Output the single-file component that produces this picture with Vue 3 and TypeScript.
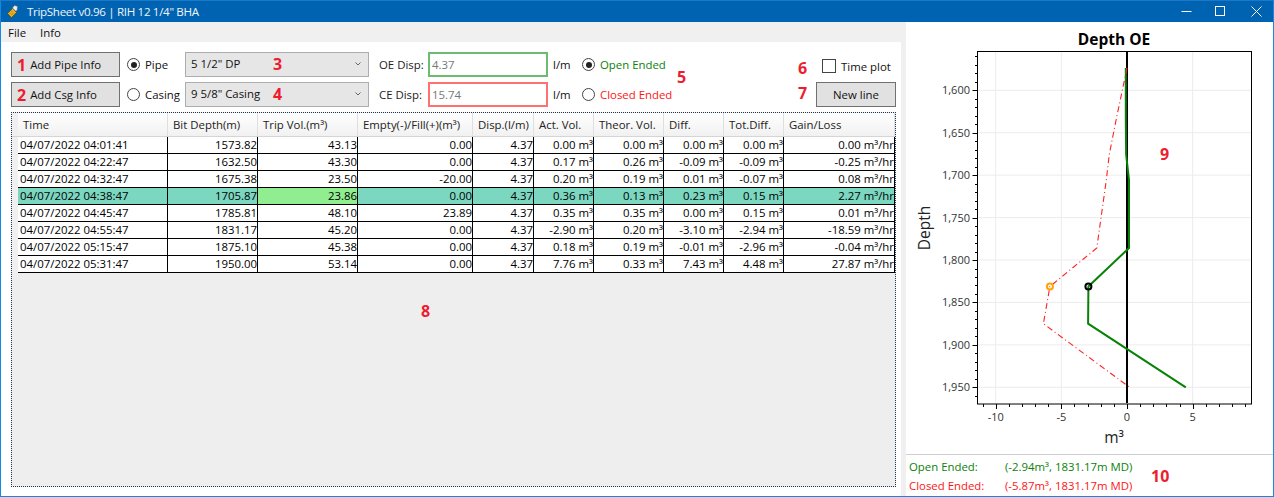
<script setup lang="ts">
const columns = ['Time', 'Bit Depth(m)', 'Trip Vol.(m³)', 'Empty(-)/Fill(+)(m³)', 'Disp.(l/m)', 'Act. Vol.', 'Theor. Vol.', 'Diff.', 'Tot.Diff.', 'Gain/Loss'];
const rows: string[][] = [
  ['04/07/2022 04:01:41', '1573.82', '43.13', '0.00', '4.37', '0.00 m³', '0.00 m³', '0.00 m³', '0.00 m³', '0.00 m³/hr'],
  ['04/07/2022 04:22:47', '1632.50', '43.30', '0.00', '4.37', '0.17 m³', '0.26 m³', '-0.09 m³', '-0.09 m³', '-0.25 m³/hr'],
  ['04/07/2022 04:32:47', '1675.38', '23.50', '-20.00', '4.37', '0.20 m³', '0.19 m³', '0.01 m³', '-0.07 m³', '0.08 m³/hr'],
  ['04/07/2022 04:38:47', '1705.87', '23.86', '0.00', '4.37', '0.36 m³', '0.13 m³', '0.23 m³', '0.15 m³', '2.27 m³/hr'],
  ['04/07/2022 04:45:47', '1785.81', '48.10', '23.89', '4.37', '0.35 m³', '0.35 m³', '0.00 m³', '0.15 m³', '0.01 m³/hr'],
  ['04/07/2022 04:55:47', '1831.17', '45.20', '0.00', '4.37', '-2.90 m³', '0.20 m³', '-3.10 m³', '-2.94 m³', '-18.59 m³/hr'],
  ['04/07/2022 05:15:47', '1875.10', '45.38', '0.00', '4.37', '0.18 m³', '0.19 m³', '-0.01 m³', '-2.96 m³', '-0.04 m³/hr'],
  ['04/07/2022 05:31:47', '1950.00', '53.14', '0.00', '4.37', '7.76 m³', '0.33 m³', '7.43 m³', '4.48 m³', '27.87 m³/hr'],
];

const px = (v: number): number => 1127 + v * 13.13;
const py = (d: number): number => 90.3 + (d - 1600) * 0.8486;
const line = (pts: number[][]): string => pts.map(([v, d]) => `${px(v).toFixed(1)},${py(d).toFixed(1)}`).join(' ');

const depths = [1573.82, 1632.5, 1675.38, 1705.87, 1785.81, 1831.17, 1875.1, 1950];
const openEnded = [-0.09, -0.09, -0.07, 0.15, 0.15, -2.94, -2.96, 4.48];
const closedEnded = [0, -0.8, -1.35, -1.58, -2.3, -5.87, -6.37, 0.2];
const greenPts = line(depths.map((d, i) => [openEnded[i], d]));
const redPts = line(depths.map((d, i) => [closedEnded[i], d]));

const yMajor = [1600, 1650, 1700, 1750, 1800, 1850, 1900, 1950];
const xMajor = [-10, -5, 0, 5];
const yMinor: number[] = [];
for (let d = 1560; d <= 1960; d += 10) yMinor.push(d);
const xMinor: number[] = [];
for (let v = -11; v <= 9; v += 1) xMinor.push(v);
const fmt = (d: number): string => `${Math.floor(d / 1000)},${String(d % 1000).padStart(3, '0')}`;
</script>

<template>
  <div class="window">
    <header class="titlebar">
      <svg class="appicon" width="14" height="14" viewBox="0 0 14 14">
        <path d="M0.5 8.5 L5.5 3.5 L9.5 7.5 L4.5 12.5 Z" fill="#e6b325" stroke="#5f4a10" stroke-width="0.7" />
        <path d="M3 8.5 L5.5 6 M4.5 10 L7 7.5" stroke="#7a5d10" stroke-width="0.9" stroke-dasharray="1 1" />
        <path d="M5.5 3 L7.5 0.5 L10.5 1.5 L10 5.5 L8.5 6 Z" fill="#f0f0f0" stroke="#777" stroke-width="0.5" />
      </svg>
      <span class="title">TripSheet v0.96 | RIH 12 1/4" BHA</span>
      <div class="winbtns">
        <svg class="wmin" width="11" height="11" viewBox="0 0 11 11"><path d="M0.5 5.5H10.5" stroke="#fff" fill="none" /></svg>
        <svg class="wmax" width="11" height="11" viewBox="0 0 11 11"><rect x="0.5" y="0.5" width="9" height="9" stroke="#fff" fill="none" /></svg>
        <svg width="11" height="11" viewBox="0 0 11 11"><path d="M0.5 0.5L10.5 10.5M10.5 0.5L0.5 10.5" stroke="#fff" fill="none" /></svg>
      </div>
    </header>

    <div class="body">
      <div class="main">
        <nav class="menu"><span>File</span><span>Info</span></nav>
        <section class="panel">
          <div class="controls">
            <button class="btn"><b class="num">1</b>Add Pipe Info</button>
            <label class="radio"><i class="dot on"></i>Pipe</label>
            <div class="combo"><span>5 1/2" DP</span><b class="num n3">3</b>
              <svg width="6" height="4" viewBox="0 0 6 4"><path d="M0.5 0.5L3 3L5.5 0.5" stroke="#666" fill="none" /></svg>
            </div>
            <span class="lbl">OE Disp:</span>
            <div class="field green">4.37</div>
            <span class="unit">l/m</span>
            <label class="radio wide green-t"><i class="dot on"></i>Open Ended</label>
            <label class="check"><b class="num n6">6</b><i class="box"></i>Time plot</label>

            <button class="btn"><b class="num">2</b>Add Csg Info</button>
            <label class="radio"><i class="dot"></i>Casing</label>
            <div class="combo"><span>9 5/8" Casing</span><b class="num n4">4</b>
              <svg width="6" height="4" viewBox="0 0 6 4"><path d="M0.5 0.5L3 3L5.5 0.5" stroke="#666" fill="none" /></svg>
            </div>
            <span class="lbl">CE Disp:</span>
            <div class="field red">15.74</div>
            <span class="unit">l/m</span>
            <label class="radio wide red-t"><i class="dot"></i>Closed Ended<b class="num n5">5</b></label>
            <div class="newcell"><b class="num n7">7</b><button class="btn newline">New line</button></div>
          </div>

          <div class="grid">
            <div class="row head">
              <div class="corner"></div>
              <div v-for="c in columns" :key="c" class="hcell">{{ c }}</div>
            </div>
            <div v-for="(r, i) in rows" :key="i" class="row" :class="{ sel: i === 3 }">
              <div class="rowhead"></div>
              <div v-for="(v, j) in r" :key="j" class="cell" :class="{ first: j === 0, hot: i === 3 && j === 2 }">{{ v }}</div>
            </div>
            <b class="num n8">8</b>
          </div>
        </section>
      </div>

      <aside class="side">
        <svg class="chart" width="367" height="432" viewBox="906 22 367 432">
          <g stroke="#ececec" stroke-width="1">
            <line v-for="d in yMajor" :key="d" x1="978" x2="1251" :y1="py(d)" :y2="py(d)" />
            <line v-for="v in xMajor" :key="v" :x1="px(v)" :x2="px(v)" y1="52" y2="404" />
          </g>
          <rect x="977.5" y="51.5" width="274" height="352.5" fill="none" stroke="#000" />
          <g stroke="#000" stroke-width="1">
            <line v-for="d in yMinor" :key="d" :x1="d % 50 === 0 ? 972.5 : 975" x2="977.5" :y1="Math.round(py(d)) + 0.5" :y2="Math.round(py(d)) + 0.5" />
            <line v-for="v in xMinor" :key="v" :x1="Math.round(px(v)) + 0.5" :x2="Math.round(px(v)) + 0.5" y1="404" :y2="v % 5 === 0 ? 409 : 407" />
          </g>
          <line x1="1127" x2="1127" y1="52" y2="403" stroke="#000" stroke-width="2" />
          <polyline :points="greenPts" fill="none" stroke="#078207" stroke-width="2" />
          <polyline :points="redPts" fill="none" stroke="#ff2020" stroke-width="1.1" stroke-dasharray="6 3 1 3" />
          <circle :cx="px(-5.87)" :cy="py(1831.17)" r="3" fill="none" stroke="#ffa500" stroke-width="2" />
          <circle :cx="px(-2.94)" :cy="py(1831.17)" r="3" fill="none" stroke="#000" stroke-width="2" />
          <text x="1114" y="45" class="ctitle" text-anchor="middle">Depth OE</text>
          <text v-for="d in yMajor" :key="d" x="970" :y="py(d) + 4" class="tick" text-anchor="end">{{ fmt(d) }}</text>
          <text v-for="v in xMajor" :key="v" :x="px(v)" y="421" class="tick" text-anchor="middle">{{ v }}</text>
          <text x="1114" y="443" class="axis" text-anchor="middle">m³</text>
          <text x="0" y="0" class="axis" text-anchor="middle" transform="translate(929.5 228) rotate(-90)">Depth</text>
        </svg>
        <b class="num n9">9</b>
        <footer class="readout">
          <span class="green-t">Open Ended:</span><span class="green-t">(-2.94m³, 1831.17m MD)</span>
          <span class="red-t">Closed Ended:</span><span class="red-t">(-5.87m³, 1831.17m MD)</span>
          <b class="num n10">10</b>
        </footer>
      </aside>
    </div>
  </div>
</template>

<style>
html, body { margin: 0; padding: 0; background: #fff; }
</style>

<style scoped>
.window {
  width: 1274px;
  height: 497px;
  box-sizing: border-box;
  border: 1px solid #1489e4;
  border-top-color: #1a78c8;
  display: flex;
  flex-direction: column;
  font-family: "Open Sans", "Noto Sans", sans-serif;
  font-size: 11.4px;
  color: #111;
  overflow: hidden;
  background: #fff;
}
.titlebar {
  height: 21px;
  flex: none;
  background: #0063b1;
  color: #fff;
  display: flex;
  align-items: center;
  padding-left: 6px;
}
.appicon { flex: none; }
.title { margin-left: 6px; font-size: 11.6px; letter-spacing: -0.33px; color: #eef4fa; }
.winbtns { margin-left: auto; display: flex; padding-right: 11px; align-items: center; }
.winbtns svg { display: block; }
.wmin { margin-right: 23px; }
.wmax { margin-right: 25px; }
.body { flex: 1; display: flex; min-height: 0; }
.main { width: 905px; flex: none; background: #f0f0f0; display: flex; flex-direction: column; }
.menu { height: 20px; flex: none; display: flex; align-items: center; gap: 14px; padding-left: 7px; }
.panel { width: 900px; flex: 1; background: #fff; box-sizing: border-box; padding: 10px 0 0 10px; }
.controls {
  display: grid;
  grid-template-columns: 109px 65px 184px 10px 49px 120px 34px 234px 80px;
  grid-template-rows: 25px 25px;
  row-gap: 5px;
  align-items: center;
}
.controls > .lbl { grid-column: 5; }
.controls > .combo { grid-column: 3; }
.controls > .field { grid-column: 6; }
.controls > .unit { grid-column: 7; padding-left: 5px; }
.controls > .radio.wide { grid-column: 8; padding-left: 0; }
.controls > .check, .controls > .newcell { grid-column: 9; }
.btn {
  height: 25px;
  box-sizing: border-box;
  background: #e1e1e1;
  border: 1px solid #707070;
  padding: 0;
  font: inherit;
  color: #111;
  display: flex;
  align-items: center;
  justify-content: flex-start;
  position: relative;
  width: 109px;
  padding-left: 5px;
}
.num {
  color: #ee1c2e;
  font-weight: 700;
  font-size: 16px;
  line-height: 1;
}
.btn .num { margin-right: 4px; }
.radio { display: flex; align-items: center; height: 25px; padding-left: 7px; position: relative; }
.dot {
  width: 11px;
  height: 11px;
  border: 1px solid #444;
  border-radius: 50%;
  margin-right: 5px;
  position: relative;
  flex: none;
  background: #fff;
}
.dot.on::after {
  content: "";
  position: absolute;
  left: 2.5px;
  top: 2.5px;
  width: 6px;
  height: 6px;
  border-radius: 50%;
  background: #222;
}
.combo {
  height: 25px;
  box-sizing: border-box;
  background: #e6e6e6;
  border: 1px solid #adadad;
  display: flex;
  align-items: center;
  padding: 0 7px 3px 5px;
  justify-content: space-between;
  position: relative;
}
.combo svg { margin-top: 1px; }
.n3 { position: absolute; left: 87px; top: 3px; }
.n4 { position: absolute; left: 87px; top: 3px; }
.n5 { position: absolute; left: 95px; top: -13px; }
.n6 { position: absolute; left: -18px; top: 1px; }
.n7 { position: absolute; left: -18px; top: 3px; }
.n8 { position: absolute; left: 409px; top: 190px; }
.n9 { position: absolute; left: 254px; top: 124px; }
.n10 { position: absolute; left: 245px; top: 13px; }
.lbl { color: #222; }
.field {
  height: 25px;
  box-sizing: border-box;
  border: 2px solid;
  padding-left: 2px;
  display: flex;
  align-items: center;
  color: #777;
}
.field.green { border-color: #6cbb6e; }
.field.red { border-color: #ff7070; }
.green-t { color: #0a820a; }
.red-t { color: #ff1414; }
.check { display: flex; align-items: center; position: relative; padding-left: 6px; margin-top: 3px; }
.box { width: 12px; height: 12px; border: 1px solid #444; margin-right: 5px; flex: none; }
.newcell { position: relative; display: flex; }
.newline { width: 80px; justify-content: center; padding: 0; }
.grid {
  margin-top: 5px;
  width: 885px;
  height: 375px;
  box-sizing: border-box;
  border: 1px dotted #1f3550;
  background: #eee;
  position: relative;
  overflow: hidden;
}
.row {
  display: grid;
  grid-template-columns: 6px 150px 90px 100px 115px 61px 60px 70px 60px 60px 111px;
  height: 17px;
  box-sizing: border-box;
  border-bottom: 1px solid #000;
  background: #fff;
  line-height: 16px;
  color: #000;
}
.row.sel { background: #7bd7c0; }
.row.head {
  height: 24px;
  background: linear-gradient(#fff, #f1f1f1);
  border-bottom: 1px solid #d5d5d5;
  line-height: 23px;
}
.corner, .rowhead { background: #f0f0f0; }
.rowhead { margin-bottom: -1px; }
.hcell {
  padding-left: 5px;
  border-right: 1px solid #dfdfdf;
  white-space: nowrap;
  overflow: hidden;
  color: #222;
}
.cell {
  text-align: right;
  border-right: 1px solid #000;
  white-space: nowrap;
  overflow: hidden;
  min-width: 0;
}
.cell.first { text-align: left; padding-left: 2px; }
.cell.hot { background: #90ee90; }
.side { flex: 1; display: flex; flex-direction: column; position: relative; min-width: 0; }
.chart { display: block; flex: none; }
.ctitle { font-size: 15.5px; font-weight: 700; fill: #000; }
.tick { font-size: 11px; fill: #333; }
.axis { font-size: 15.5px; fill: #222; }
.readout {
  flex: 1;
  border-top: 1px solid #cfcfcf;
  display: grid;
  grid-template-columns: 96px 1fr;
  grid-auto-rows: 19px;
  align-items: center;
  padding: 2px 0 0 3px;
  position: relative;
}
</style>
